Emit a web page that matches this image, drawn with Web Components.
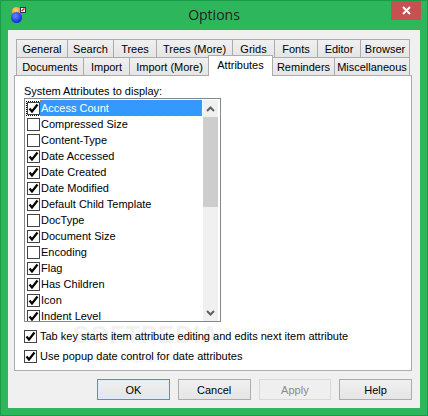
<!DOCTYPE html>
<html>
<head>
<meta charset="utf-8">
<title>Options</title>
<style>
  html, body { margin: 0; padding: 0; background: #2db65c; }
  body { font: 11px "Liberation Sans", sans-serif; color: #000; }
</style>
</head>
<body>
<options-dialog caption="Options">
  <tab-strip>
    <tab-row>
      <tab-item w="52">General</tab-item>
      <tab-item w="47">Search</tab-item>
      <tab-item w="44">Trees</tab-item>
      <tab-item w="77">Trees (More)</tab-item>
      <tab-item w="43">Grids</tab-item>
      <tab-item w="44">Fonts</tab-item>
      <tab-item w="44">Editor</tab-item>
      <tab-item w="50">Browser</tab-item>
    </tab-row>
    <tab-row>
      <tab-item w="68">Documents</tab-item>
      <tab-item w="47">Import</tab-item>
      <tab-item w="81">Import (More)</tab-item>
      <tab-item w="65" selected>Attributes</tab-item>
      <tab-item w="63">Reminders</tab-item>
      <tab-item w="76">Miscellaneous</tab-item>
    </tab-row>
  </tab-strip>
  <tab-panel>
    <div slot="label">System Attributes to display:</div>
    <attr-list slot="list">
      <attr-row checked selected>Access Count</attr-row>
      <attr-row>Compressed Size</attr-row>
      <attr-row>Content-Type</attr-row>
      <attr-row checked>Date Accessed</attr-row>
      <attr-row checked>Date Created</attr-row>
      <attr-row checked>Date Modified</attr-row>
      <attr-row checked>Default Child Template</attr-row>
      <attr-row>DocType</attr-row>
      <attr-row checked>Document Size</attr-row>
      <attr-row>Encoding</attr-row>
      <attr-row checked>Flag</attr-row>
      <attr-row checked>Has Children</attr-row>
      <attr-row checked>Icon</attr-row>
      <attr-row checked>Indent Level</attr-row>
    </attr-list>
    <check-line slot="opt1">Tab key starts item attribute editing and edits next item attribute</check-line>
    <check-line slot="opt2">Use popup date control for date attributes</check-line>
  </tab-panel>
  <button-row>
    <push-button default>OK</push-button>
    <push-button>Cancel</push-button>
    <push-button disabled>Apply</push-button>
    <push-button>Help</push-button>
  </button-row>
</options-dialog>

<script>
const CHECK = `<svg width="11" height="11" viewBox="0 0 11 11"><path d="M1.5 5.5 L4 8.5 L9.5 1.5" fill="none" stroke="#000" stroke-width="2.2"/></svg>`;

class OptionsDialog extends HTMLElement {
  constructor() {
    super();
    this.attachShadow({ mode: "open" });
  }
  connectedCallback() {
    this.shadowRoot.innerHTML = `
      <style>
        :host { display: block; width: 428px; height: 416px; box-sizing: border-box; border: 1px solid #1d9a48; background: #2db65c; }
        .title { height: 29px; display: flex; align-items: center; position: relative; }
        .title span { flex: 1; text-align: center; font: 14px "Open Sans", sans-serif; color: #222; padding-bottom: 3px; }
        .icon { position: absolute; left: 9px; top: 5px; }
        .close { position: absolute; right: 6px; top: 0; width: 30px; height: 19px; background: #c75050; display: flex; align-items: center; justify-content: center; }
        .client { margin: 0 7px 7px; height: 378px; box-sizing: border-box; background: #f0f0f0; padding: 9px 8px 0 6px; }
      </style>
      <div class="title">
        <svg class="icon" width="18" height="18" viewBox="0 0 18 18">
          <defs>
            <radialGradient id="o" cx="0.4" cy="0.35" r="0.7"><stop offset="0" stop-color="#ffd27a"/><stop offset="1" stop-color="#ee8412"/></radialGradient>
            <radialGradient id="b" cx="0.4" cy="0.35" r="0.7"><stop offset="0" stop-color="#5a8cff"/><stop offset="1" stop-color="#1020d0"/></radialGradient>
          </defs>
          <circle cx="6.5" cy="5.5" r="4.5" fill="url(#o)"/>
          <circle cx="6.5" cy="11.5" r="5.5" fill="url(#b)"/>
          <rect x="10.5" y="1.5" width="5" height="5" fill="#fff" stroke="#303060"/>
          <path d="M11.5 5 L14.5 2.5" stroke="#d02020" stroke-width="1.5"/>
        </svg>
        <span>${this.getAttribute("caption")}</span>
        <div class="close"><svg width="9" height="9" viewBox="0 0 9 9"><path d="M1 1 L8 8 M8 1 L1 8" stroke="#fff" stroke-width="2"/></svg></div>
      </div>
      <div class="client"><slot></slot></div>`;
  }
}

class TabStrip extends HTMLElement {
  constructor() {
    super();
    this.attachShadow({ mode: "open" }).innerHTML = `
      <style>:host { display: block; position: relative; z-index: 1; margin-left: 2px; }</style>
      <slot></slot>`;
  }
}

class TabRow extends HTMLElement {
  constructor() {
    super();
    this.attachShadow({ mode: "open" }).innerHTML = `
      <style>:host { display: flex; height: 18px; align-items: flex-end; }</style>
      <slot></slot>`;
  }
}

class TabItem extends HTMLElement {
  constructor() {
    super();
    this.attachShadow({ mode: "open" });
  }
  connectedCallback() {
    const w = this.getAttribute("w");
    this.shadowRoot.innerHTML = `
      <style>
        :host { display: block; box-sizing: border-box; width: ${w}px; height: 18px; margin-right: -1px; flex: none;
          border: 1px solid #acacac; border-bottom: 0; background: linear-gradient(#f0f0f0, #e5e5e5);
          text-align: center; line-height: 18px; white-space: nowrap; }
        :host([selected]) { background: #fff; height: 21px; margin: 0 -1px -1px -1px; position: relative; z-index: 2; line-height: 18px; }
      </style>
      <slot></slot>`;
  }
}

class TabPanel extends HTMLElement {
  constructor() {
    super();
    this.attachShadow({ mode: "open" }).innerHTML = `
      <style>
        :host { display: block; box-sizing: border-box; width: 398px; height: 296px; border: 1px solid #acacac; background: #fff; padding: 8px 9px 0; position: relative; }
        .label { height: 14px; line-height: 15px; }
        .opt { margin-top: 6px; }
        .opt + .opt { margin-top: 4px; }
        .mark { position: absolute; left: 58px; top: 245px; font: bold 24px "Liberation Sans", sans-serif; letter-spacing: 1px; color: #000; opacity: .05; white-space: nowrap; }
        .url { position: absolute; left: 80px; top: 277px; font-size: 10px; color: #000; opacity: .06; white-space: nowrap; }
      </style>
      <div class="label"><slot name="label"></slot></div>
      <slot name="list"></slot>
      <div class="opt"><slot name="opt1"></slot></div>
      <div class="opt"><slot name="opt2"></slot></div>
      <div class="mark">SOFTPEDIA</div>
      <div class="url">www.softpedia.com</div>`;
  }
}

class AttrList extends HTMLElement {
  constructor() {
    super();
    this.attachShadow({ mode: "open" }).innerHTML = `
      <style>
        :host { display: flex; box-sizing: border-box; width: 197px; height: 224px; border: 1px solid #828790; background: #fff; overflow: hidden; }
        .rows { flex: 1; padding: 1px 0 0 1px; overflow: hidden; }
        .bar { width: 15px; margin: 1px 2px 0 1px; background: #f0f0f0; display: flex; flex-direction: column; }
        .arrow { height: 17px; display: flex; align-items: center; justify-content: center; }
        .thumb { height: 90px; background: #cdcdcd; }
        .track { flex: 1; }
      </style>
      <div class="rows"><slot></slot></div>
      <div class="bar">
        <div class="arrow"><svg width="9" height="6" viewBox="0 0 9 6"><path d="M1 5 L4.5 1.5 L8 5" fill="none" stroke="#606060" stroke-width="2"/></svg></div>
        <div class="thumb"></div>
        <div class="track"></div>
        <div class="arrow"><svg width="9" height="6" viewBox="0 0 9 6"><path d="M1 1 L4.5 4.5 L8 1" fill="none" stroke="#606060" stroke-width="2"/></svg></div>
      </div>`;
  }
}

class AttrRow extends HTMLElement {
  constructor() {
    super();
    this.attachShadow({ mode: "open" });
  }
  connectedCallback() {
    this.shadowRoot.innerHTML = `
      <style>
        :host { display: flex; align-items: center; height: 16px; white-space: nowrap; }
        .box { width: 13px; height: 13px; box-sizing: border-box; border: 1px solid #444; background: #fff; margin-left: 1px; flex: none; display: flex; align-items: center; justify-content: center; }
        .focus { outline: 1px dotted #000; }
        .text { flex: 1; height: 16px; line-height: 16px; padding-left: 1px; }
        :host([selected]) .text { background: #3399ff; color: #fff; outline: 1px dotted #c77a20; outline-offset: -1px; }
      </style>
      <div class="box ${this.hasAttribute("selected") ? "focus" : ""}">${this.hasAttribute("checked") ? CHECK : ""}</div>
      <div class="text"><slot></slot></div>`;
  }
}

class CheckLine extends HTMLElement {
  constructor() {
    super();
    this.attachShadow({ mode: "open" }).innerHTML = `
      <style>
        :host { display: flex; align-items: center; height: 16px; gap: 3px; white-space: nowrap; }
        .box { width: 13px; height: 13px; box-sizing: border-box; border: 1px solid #444; display: flex; align-items: center; justify-content: center; }
      </style>
      <div class="box">${CHECK}</div><div><slot></slot></div>`;
  }
}

class ButtonRow extends HTMLElement {
  constructor() {
    super();
    this.attachShadow({ mode: "open" }).innerHTML = `
      <style>:host { display: flex; gap: 8px; margin: 8px 0 0 83px; }</style>
      <slot></slot>`;
  }
}

class PushButton extends HTMLElement {
  constructor() {
    super();
    this.attachShadow({ mode: "open" }).innerHTML = `
      <style>
        :host { display: block; box-sizing: border-box; width: 73px; height: 21px; border: 1px solid #acacac; background: linear-gradient(#f0f0f0, #e5e5e5); text-align: center; line-height: 20px; }
        :host([default]) { border-color: #3399ff; box-shadow: inset 0 0 0 1px #dcecfc; }
        :host([disabled]) { border-color: #d9d9d9; background: #efefef; color: #8a8a8a; }
      </style>
      <slot></slot>`;
  }
}

customElements.define("options-dialog", OptionsDialog);
customElements.define("tab-strip", TabStrip);
customElements.define("tab-row", TabRow);
customElements.define("tab-item", TabItem);
customElements.define("tab-panel", TabPanel);
customElements.define("attr-list", AttrList);
customElements.define("attr-row", AttrRow);
customElements.define("check-line", CheckLine);
customElements.define("button-row", ButtonRow);
customElements.define("push-button", PushButton);
</script>
</body>
</html>
